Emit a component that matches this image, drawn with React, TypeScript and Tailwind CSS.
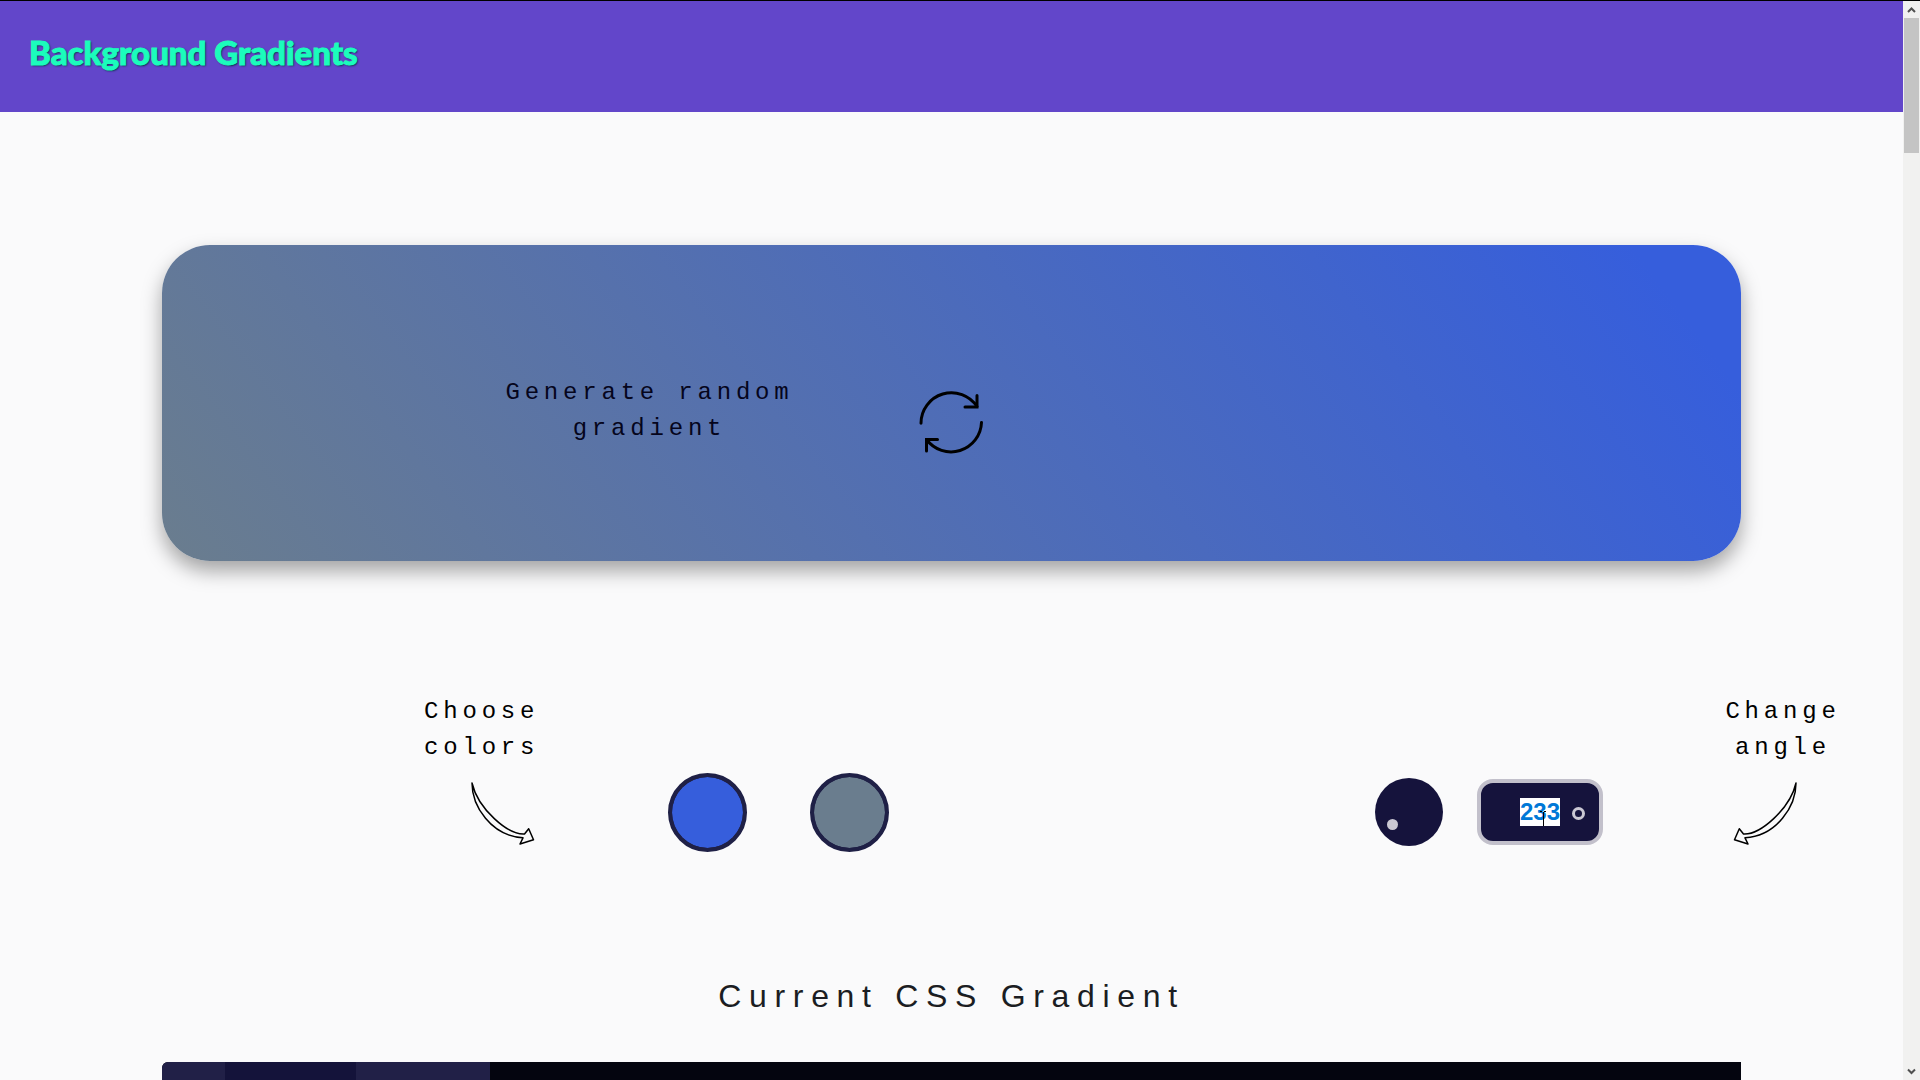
import { useEffect, useRef } from "react";

const START = "#365edc";
const END = "#6a7d8e";

function RefreshIcon() {
  return (
    <svg viewBox="0 0 64 64" className="size-16" fill="none" stroke="#000" strokeWidth="3" strokeLinecap="round" aria-hidden="true">
      <path d="M2 32.3A30.5 30.5 0 0 1 58 15.5" />
      <path d="M58 4.5V16H46" />
      <path d="M62.5 31.5A30.5 30.5 0 0 1 7.5 48.5" />
      <path d="M18.5 48.6H7.5V60" />
    </svg>
  );
}

function CurvedArrow({ className }: { className: string }) {
  return (
    <svg viewBox="0 0 64 64" className={className} fill="none" stroke="#000" strokeWidth="1.5" strokeLinejoin="round" aria-hidden="true">
      <path d="M1 1C1 24 20 54 52 55.8L49 62L62.5 57.7L57.7 46.7L53.5 52C37 53 7 27 1 1Z" />
    </svg>
  );
}

function Swatch({ label, value }: { label: string; value: string }) {
  return (
    <input
      type="color"
      aria-label={label}
      defaultValue={value}
      className="size-[79px] cursor-pointer appearance-none overflow-hidden rounded-full border-4 border-[#1f2046] bg-[#1f2046] p-0 [&::-webkit-color-swatch-wrapper]:p-0 [&::-webkit-color-swatch]:rounded-full [&::-webkit-color-swatch]:border-0"
    />
  );
}

function AngleField() {
  const field = useRef<HTMLInputElement>(null);
  useEffect(() => {
    field.current?.focus();
    field.current?.select();
  }, []);
  return (
    <div className="relative">
      <input
        ref={field}
        type="text"
        inputMode="numeric"
        aria-label="Angle in degrees"
        defaultValue="233"
        className="block h-[66px] w-[126px] rounded-2xl border-4 border-[#c2c0cb] bg-[#15133c] text-center text-2xl font-bold text-white outline-none selection:bg-white selection:text-[#0078d7]"
      />
      <span className="pointer-events-none absolute top-7 right-[18px] size-[13px] rounded-full border-3 border-[#cac8d3]" />
      <svg viewBox="0 0 8 16" className="pointer-events-none absolute top-8 left-[62px] h-4 w-2" stroke="#000" fill="none" aria-hidden="true">
        <path d="M1 0.5H3M5 0.5H7M4.5 1V15" />
      </svg>
    </div>
  );
}

function ScrollBar() {
  return (
    <div className="flex w-[17px] shrink-0 flex-col items-center bg-[#f1f1f0]" aria-hidden="true">
      <svg viewBox="0 0 17 17" className="h-[17px] w-[17px]" fill="none" stroke="#505050" strokeWidth="2">
        <path d="M5 11L8.5 7.5L12 11" />
      </svg>
      <div className="h-[135px] w-[15px] bg-[#c4c4c4]" />
      <svg viewBox="0 0 17 17" className="mt-auto h-[17px] w-[17px]" fill="none" stroke="#505050" strokeWidth="2">
        <path d="M5 6.5L8.5 10L12 6.5" />
      </svg>
    </div>
  );
}

export default function App() {
  return (
    <div className="flex h-screen overflow-hidden border-t border-black bg-[#fafafb] font-['Liberation_Sans',Arial,sans-serif]">
      <div className="flex min-w-0 flex-1 flex-col">
        <header className="h-[111px] shrink-0 bg-[#6246ca] px-[29px] pt-[27px]">
          <h1 className="font-['Fredoka_One','Lato',sans-serif] text-[33px] leading-12 font-black text-[#1bfcbc] [-webkit-text-stroke:1px_#1bfcbc] [text-shadow:1px_1px_2px_#062f45]">
            Background Gradients
          </h1>
        </header>

        <main className="flex flex-1 flex-col">
          <section
            className="mx-auto mt-[133px] grid h-[316px] w-[83%] shrink-0 grid-cols-[1fr_auto_1fr] items-center rounded-[48px] shadow-[0_10px_20px_rgba(0,0,0,0.35)]"
            style={{ backgroundImage: `linear-gradient(233deg, ${START} 6%, ${END})` }}
          >
            <p className="mt-4 mr-30 w-[300px] justify-self-end text-center font-['Liberation_Mono','Courier_New',monospace] text-2xl leading-9 tracking-[0.2em] text-[#05051c]">
              Generate random gradient
            </p>
            <button type="button" aria-label="Generate random gradient" className="mt-10 cursor-pointer">
              <RefreshIcon />
            </button>
          </section>

          <section className="mt-[133px] flex shrink-0 pr-14 pl-[22%]">
            <div className="w-[126px] pb-1.5">
              <p className="text-center font-['Liberation_Mono','Courier_New',monospace] text-2xl leading-9 tracking-[0.2em]">
                Choose colors
              </p>
              <CurvedArrow className="mt-4 ml-[52px] size-16" />
            </div>
            <div className="ml-[123px] flex items-center gap-[63px] self-end">
              <Swatch label="First color" value={START} />
              <Swatch label="Second color" value={END} />
            </div>
            <div className="mr-29 ml-auto flex h-20 items-center gap-[34px] self-end">
              <button type="button" aria-label="Angle dial" className="relative size-[68px] cursor-pointer rounded-full bg-[#15133c]">
                <span className="absolute bottom-4 left-3 size-[11px] rounded-full bg-[#cac8d3]" />
              </button>
              <AngleField />
            </div>
            <div className="w-32 pb-1.5">
              <p className="text-center font-['Liberation_Mono','Courier_New',monospace] text-2xl leading-9 tracking-[0.2em]">
                Change angle
              </p>
              <CurvedArrow className="mt-4 ml-[14px] size-16 -scale-x-100" />
            </div>
          </section>

          <h2 className="mt-30 shrink-0 text-center text-[32px] leading-12 tracking-[0.24em] text-[#1b1d22]">
            Current CSS Gradient
          </h2>

          <section className="mx-auto mt-[42px] flex w-[83%] flex-1 overflow-hidden rounded-tl-md bg-[#04050f]">
            <div className="w-[63px] bg-[#212047]" />
            <div className="w-[131px] bg-[#14133a]" />
            <div className="w-[134px] bg-[#212047]" />
          </section>
        </main>
      </div>
      <ScrollBar />
    </div>
  );
}
